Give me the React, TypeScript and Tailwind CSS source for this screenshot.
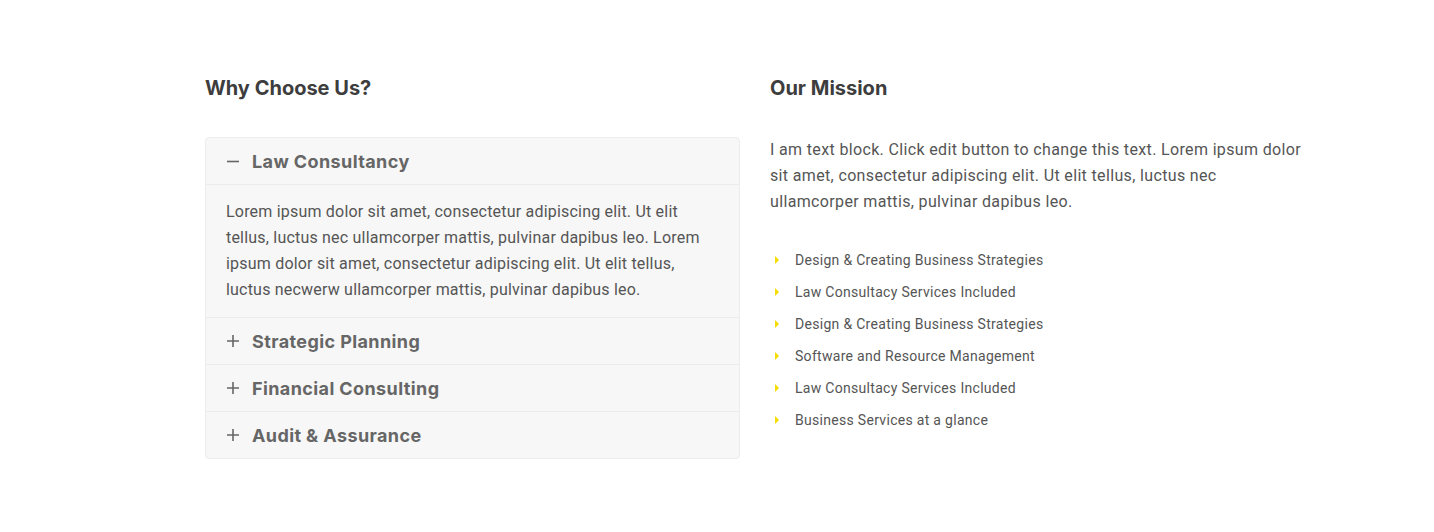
import React from "react";

const items = [
  "Design & Creating Business Strategies",
  "Law Consultacy Services Included",
  "Design & Creating Business Strategies",
  "Software and Resource Management",
  "Law Consultacy Services Included",
  "Business Services at a glance",
];

const head = { fontFamily: "Inter, 'Noto Sans', sans-serif" };
const body = { fontFamily: "Roboto, 'Noto Sans', sans-serif" };

function Minus() {
  return (
    <svg width="12" height="12" viewBox="0 0 12 12" className="shrink-0">
      <path d="M0 6.5h12" stroke="#666" strokeWidth="1.6" />
    </svg>
  );
}
function Plus() {
  return (
    <svg width="12" height="12" viewBox="0 0 12 12" className="shrink-0">
      <path d="M0 6h12M6 0v12" stroke="#666" strokeWidth="1.6" />
    </svg>
  );
}

function Header({ open, title }: { open?: boolean; title: string }) {
  return (
    <div className="flex h-[46px] items-center gap-[13px] pl-[21px]">
      {open ? <Minus /> : <Plus />}
      <span className="text-[18px] font-bold tracking-[0.4px] text-[#666]" style={head}>
        {title}
      </span>
    </div>
  );
}

export default function App() {
  return (
    <div className="min-h-[532px] bg-white pt-[75px]">
      <div className="flex gap-[30px] pl-[205px]">
        <div className="w-[535px]">
          <h2 className="text-[20px] font-bold leading-[26px] text-[#3d3d3d]" style={head}>
            Why Choose Us?
          </h2>
          <div className="mt-[36px] rounded-[4px] border border-[#ececec] bg-[#f7f7f7]">
            <Header open title="Law Consultancy" />
            <div
              className="border-t border-[#ececec] px-[20px] pb-[14px] pt-[14px] text-[16px] leading-[26px] tracking-[0.2px] text-[#555]"
              style={body}
            >
              Lorem ipsum dolor sit amet, consectetur adipiscing elit. Ut elit tellus, luctus nec ullamcorper
              mattis, pulvinar dapibus leo. Lorem ipsum dolor sit amet, consectetur adipiscing elit. Ut elit
              tellus, luctus necwerw ullamcorper mattis, pulvinar dapibus leo.
            </div>
            <div className="border-t border-[#ececec]">
              <Header title="Strategic Planning" />
            </div>
            <div className="border-t border-[#ececec]">
              <Header title="Financial Consulting" />
            </div>
            <div className="border-t border-[#ececec]">
              <Header title="Audit & Assurance" />
            </div>
          </div>
        </div>
        <div className="w-[535px]">
          <h2 className="text-[20px] font-bold leading-[26px] text-[#3d3d3d]" style={head}>
            Our Mission
          </h2>
          <p className="mt-[36px] text-[16px] leading-[26px] tracking-[0.35px] text-[#555]" style={body}>
            I am text block. Click edit button to change this text. Lorem ipsum dolor sit amet, consectetur
            adipiscing elit. Ut elit tellus, luctus nec ullamcorper mattis, pulvinar dapibus leo.
          </p>
          <ul className="mt-[34px] flex flex-col gap-[10px]">
            {items.map((t, i) => (
              <li
                key={i}
                className="flex h-[22px] items-center text-[14px] tracking-[0.3px] text-[#555]"
                style={body}
              >
                <svg width="25" height="8" viewBox="0 0 25 8" className="shrink-0">
                  <path d="M5 0L9 4L5 8Z" fill="#f7dc00" />
                </svg>
                {t}
              </li>
            ))}
          </ul>
        </div>
      </div>
    </div>
  );
}
